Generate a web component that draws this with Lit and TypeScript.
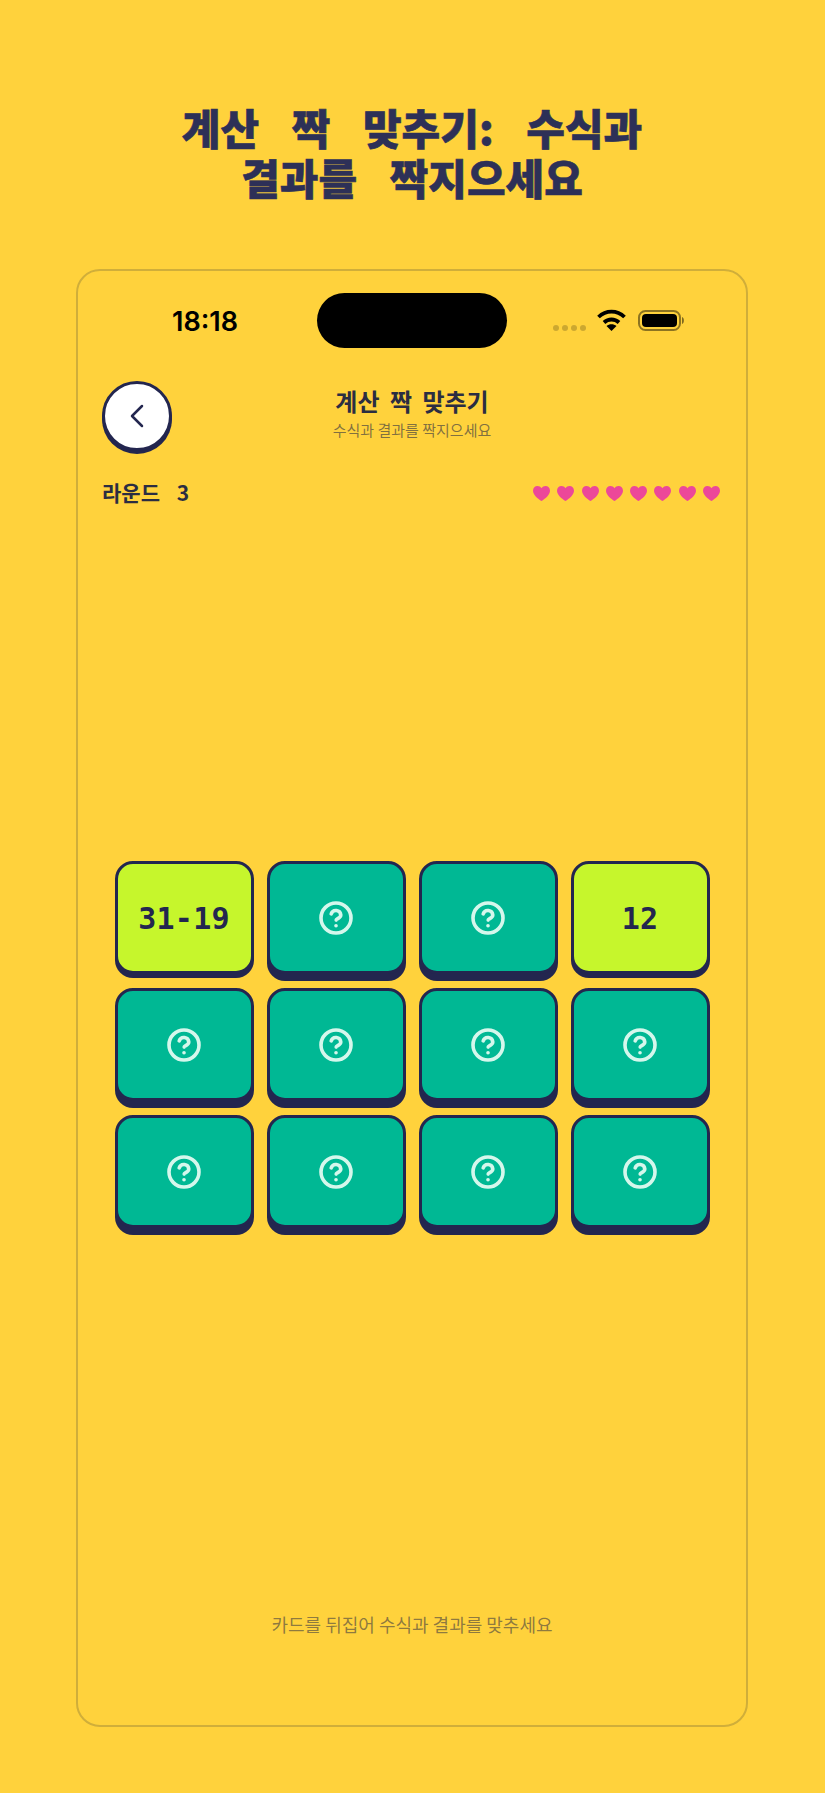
import { LitElement, html, css } from "lit";
import { customElement } from "lit/decorators.js";

@customElement("app-root")
export class AppRoot extends LitElement {
  static styles = css`
    :host { display: block; width: 825px; height: 1793px; background: #ffd23c; overflow: hidden; font-family: "Noto Sans CJK KR", Inter, sans-serif; }
    .page { display: flex; flex-direction: column; align-items: center; height: 100%; box-sizing: border-box; padding: 102px 1px 0 0; }
    h1 { margin: 0; width: 660px; text-align: center; font-size: 42px; line-height: 50px; font-weight: 900; color: #2d3057; word-spacing: 23px; -webkit-text-stroke: .6px #2d3057; }
    .frame { margin-top: 67px; width: 672px; height: 1458px; box-sizing: border-box; border: 2px solid #d0ae3a; border-radius: 24px; display: flex; flex-direction: column; padding: 0 23px; }
    .status { height: 110px; flex: none; position: relative; }
    .time { position: absolute; left: 71px; top: 34px; font: 600 27px/34px Inter, sans-serif; color: #000; }
    .island { position: absolute; left: 216px; top: 22px; width: 190px; height: 55px; border-radius: 28px; background: #000; }
    .dots { position: absolute; left: 452px; top: 54px; display: flex; gap: 3px; }
    .dots i { width: 6px; height: 6px; border-radius: 50%; background: rgba(0,0,0,.2); }
    .wifi { position: absolute; left: 496px; top: 38px; }
    .batt { position: absolute; left: 537px; top: 38px; }
    .head { position: relative; height: 72px; flex: none; display: flex; flex-direction: column; align-items: center; }
    .back { position: absolute; left: 1px; top: 0; width: 70px; height: 70px; box-sizing: border-box; border: 3px solid #23264f; border-radius: 50%; background: #fff; box-shadow: 0 3px 0 #23264f; display: flex; align-items: center; justify-content: center; }
    .t { margin-top: 4px; font-size: 24px; line-height: 32px; font-weight: 700; color: #2b2d42; word-spacing: 5px; }
    .s { margin-top: 1px; font-size: 15px; line-height: 24px; color: rgba(43,45,66,.6); }
    .round { margin-top: 22px; padding: 0 3px 0 1px; flex: none; display: flex; justify-content: space-between; align-items: center; height: 36px; }
    .r { margin-bottom: 2px; font-size: 21px; font-weight: 700; color: #2b2d42; word-spacing: 12px; }
    .hearts { display: flex; gap: 7.300px; }
    .main { flex: 1; display: flex; align-items: center; justify-content: center; padding-bottom: 36px; }
    .grid { display: grid; grid-template-columns: repeat(4, 139px); grid-auto-rows: 113px; column-gap: 13px; row-gap: 14px; }
    .card { box-sizing: border-box; border: 3px solid #23264f; border-radius: 18px; display: flex; align-items: center; justify-content: center; }
    .back-face { background: #00b894; box-shadow: 0 7px 0 #23264f; padding-top: 1px; }
    .front { background: #c6f62c; box-shadow: 0 4px 0 #23264f; padding-top: 3px; font: 700 30px/1 "DejaVu Sans Mono", "Liberation Mono", monospace; color: #23264f; letter-spacing: .2px; }
    .foot { flex: none; height: 112px; box-sizing: border-box; text-align: center; font-size: 18px; line-height: 23px; color: rgba(43,45,66,.55); }
  `;

  q() {
    return html`<svg width="36" height="36" viewBox="0 0 24 24" fill="none" stroke="#d5f7ec" stroke-width="2.400" stroke-linecap="round" stroke-linejoin="round">
      <circle cx="12" cy="12" r="10"></circle>
      <path d="M8.800 9.200a3.300 3.300 0 0 1 6.400 .8c0 2-3.100 2.500-3.100 3.400"></path>
      <path d="M12 17.200h.01"></path>
    </svg>`;
  }

  heart() {
    return html`<svg width="17" height="15" viewBox="0 0 24 21" fill="#ec4899"><path d="M12 21C7 18 0 12.500 0 6.500 0 2.700 2.800 0 6.300 0 8.600 0 10.700 1.100 12 3 13.300 1.100 15.400 0 17.700 0 21.200 0 24 2.700 24 6.500 24 12.500 17 18 12 21Z"></path></svg>`;
  }

  render() {
    const cards = ["31-19", "", "", "12", "", "", "", "", "", "", "", ""];
    return html`<div class="page">
      <h1>계산 짝 맞추기: 수식과<br />결과를 짝지으세요</h1>
      <div class="frame">
        <div class="status">
          <span class="time">18:18</span>
          <div class="island"></div>
          <div class="dots"><i></i><i></i><i></i><i></i></div>
          <svg class="wifi" width="29" height="22" viewBox="0 0 29 22" fill="none" stroke="#000" stroke-width="3.800">
            <path d="M1.500 8C9 .800 20 .800 27.500 8"></path>
            <path d="M7 13.500c4.300-4 10.700-4 15 0"></path>
            <path d="M14.500 22l-5-5c2.800-2.400 7.200-2.400 10 0z" fill="#000" stroke="none"></path>
          </svg>
          <svg class="batt" width="48" height="22" viewBox="0 0 48 22" fill="none">
            <rect x="1" y="2" width="41" height="19" rx="6.500" stroke="#000" stroke-opacity=".45" stroke-width="2"></rect>
            <rect x="4" y="5" width="35" height="13" rx="4" fill="#000"></rect>
            <path d="M44 8c2.500 .5 2.500 6.500 0 7z" fill="#000" fill-opacity=".5"></path>
          </svg>
        </div>
        <div class="head">
          <div class="back">
            <svg width="30" height="30" viewBox="0 0 24 24" fill="none" stroke="#23264f" stroke-width="2" stroke-linecap="round" stroke-linejoin="round"><path d="M16 4l-8 8 8 8"></path></svg>
          </div>
          <div class="t">계산 짝 맞추기</div>
          <div class="s">수식과 결과를 짝지으세요</div>
        </div>
        <div class="round">
          <span class="r">라운드 3</span>
          <div class="hearts">${Array.from({ length: 8 }, () => this.heart())}</div>
        </div>
        <div class="main">
          <div class="grid">
            ${cards.map((c) => c ? html`<div class="card front">${c}</div>` : html`<div class="card back-face">${this.q()}</div>`)}
          </div>
        </div>
        <div class="foot">카드를 뒤집어 수식과 결과를 맞추세요</div>
      </div>
    </div>`;
  }
}
